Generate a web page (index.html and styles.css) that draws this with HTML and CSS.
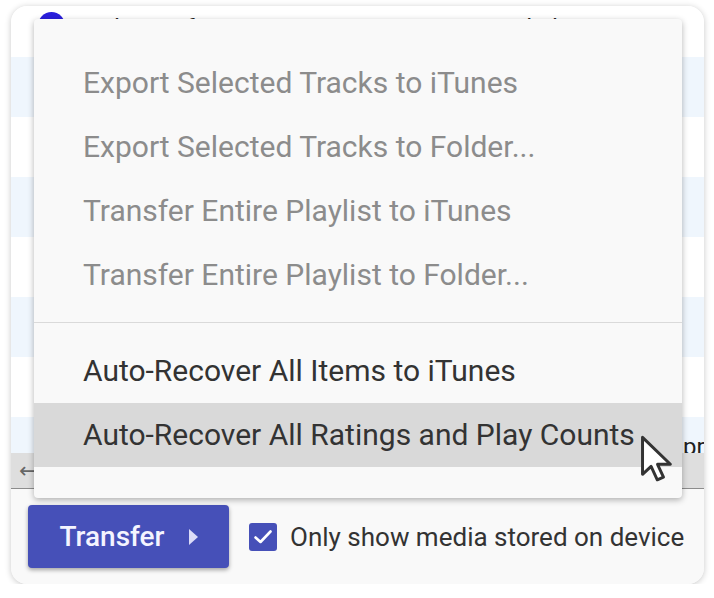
FILE: index.html
```html
<!DOCTYPE html>
<html lang="en">
<head>
    <meta charset="UTF-8">
    <meta name="viewport" content="width=device-width, initial-scale=1.0">
    <title>Transfer</title>
    <link rel="stylesheet" href="styles.css">
</head>
<body>

    <div class="card">
        <div class="tracks">
            <div class="row first">
                <span class="badge"></span>
                <span class="title">Shape of You</span>
                <span class="artist">Ed Sheeran</span>
            </div>
            <div class="row"></div>
            <div class="row"></div>
            <div class="row"></div>
            <div class="row"></div>
            <div class="row"></div>
            <div class="row"></div>
            <div class="row"><span class="extra">pr</span></div>
        </div>

        <div class="hscroll"><span class="arrow">&#8592;</span></div>

        <div class="footer">
            <button class="btn">Transfer <span class="caret"></span></button>
            <label class="check">
                <span class="box">
                    <svg width="20" height="16" viewBox="0 0 20 16"><path d="M2.5 8.5 L7.5 13 L17.5 2.5" fill="none" stroke="#fff" stroke-width="2.6" stroke-linecap="round" stroke-linejoin="round"/></svg>
                </span>
                Only show media stored on device
            </label>
        </div>

        <!-- context menu -->
        <div class="menu">
            <div class="menu-item disabled">Export Selected Tracks to iTunes</div>
            <div class="menu-item disabled">Export Selected Tracks to Folder...</div>
            <div class="menu-item disabled">Transfer Entire Playlist to iTunes</div>
            <div class="menu-item disabled">Transfer Entire Playlist to Folder...</div>
            <div class="sep"></div>
            <div class="menu-item">Auto-Recover All Items to iTunes</div>
            <div class="menu-item active">Auto-Recover All Ratings and Play Counts</div>
        </div>

        <svg class="cursor" width="36" height="50" viewBox="0 0 15 21">
            <path d="M1 1 L1 16.5 L4.6 13.2 L7.2 18.8 L9.8 17.7 L7.3 12.3 L12.7 12.3 Z" fill="#fff" stroke="#333" stroke-width="1.25" stroke-linejoin="round"/>
        </svg>
    </div>

</body>
</html>
```

FILE: styles.css
```css
body {
    font-family: Roboto, "Liberation Sans", sans-serif;
    margin: 0;
    background-color: #ffffff;
}

.card {
    position: relative;
    margin: 6px 0 0 11px;
    width: 693px;
    height: 578px;
    border-radius: 16px;
    background: #f9f9f9;
    box-shadow: 0 1px 6px rgba(0, 0, 0, 0.22);
    overflow: hidden;
    display: flex;
    flex-direction: column;
}

.tracks {
    height: 447px;
    overflow: hidden;
    background: #ffffff;
    flex-shrink: 0;
}
.row {
    height: 60px;
    display: flex;
    align-items: center;
    position: relative;
    font-size: 24px;
    color: #222;
    white-space: nowrap;
}
.row:nth-child(even) {
    background: #eff6fd;
}
.row.first {
    height: 51px;
    align-items: flex-start;
}
.badge {
    position: absolute;
    left: 27px;
    top: 6px;
    width: 27px;
    height: 27px;
    border-radius: 50%;
    background: #2a1fdc;
}
.title {
    position: absolute;
    left: 89px;
}
.artist {
    position: absolute;
    left: 494px;
}
.first .title,
.first .artist {
    top: 8px;
}
.extra {
    position: absolute;
    left: 672px;
    top: 16px;
}

.hscroll {
    height: 35px;
    background: #dedede;
    display: flex;
    align-items: center;
    flex-shrink: 0;
}
.arrow {
    margin-left: 8px;
    font-size: 22px;
    color: #666;
    font-family: "DejaVu Sans", sans-serif;
}

.footer {
    flex: 1;
    border-top: 1px solid #8c8c8c;
    background: #f9f9f9;
    display: flex;
    align-items: flex-start;
    padding: 16px 0 0 17px;
}
.btn {
    width: 201px;
    height: 63px;
    border: none;
    border-radius: 4px;
    background: #4650b8;
    color: #f4f4ff;
    font-family: Roboto, sans-serif;
    font-size: 28px;
    font-weight: 500;
    display: flex;
    align-items: center;
    justify-content: center;
    gap: 24px;
    padding: 0;
    box-shadow: 0 2px 4px rgba(0, 0, 0, 0.35);
}
.caret {
    width: 0;
    height: 0;
    border-top: 8px solid transparent;
    border-bottom: 8px solid transparent;
    border-left: 9px solid #dcdcf8;
}
.check {
    height: 63px;
    display: flex;
    align-items: center;
    gap: 13px;
    margin-left: 20px;
    font-size: 26px;
    color: #333;
    white-space: nowrap;
}
.box {
    width: 28px;
    height: 28px;
    border-radius: 3px;
    background: #4650b8;
    display: flex;
    align-items: center;
    justify-content: center;
}

/* menu overlay */
.menu {
    position: absolute;
    left: 23px;
    top: 13px;
    width: 648px;
    height: 479px;
    box-sizing: border-box;
    padding: 32px 0;
    background: #f9f9f9;
    border-radius: 4px;
    box-shadow: 0 2px 6px rgba(0, 0, 0, 0.3);
}
.menu-item {
    height: 64px;
    line-height: 64px;
    padding-left: 49px;
    font-size: 30px;
    color: #333;
    white-space: nowrap;
}
.menu-item.disabled {
    color: #8c8c8c;
}
.menu-item.active {
    background: #d9d9d9;
}
.sep {
    height: 1px;
    background: #dadada;
    margin: 15px 0 16px;
}

.cursor {
    position: absolute;
    left: 629px;
    top: 429px;
}
```
